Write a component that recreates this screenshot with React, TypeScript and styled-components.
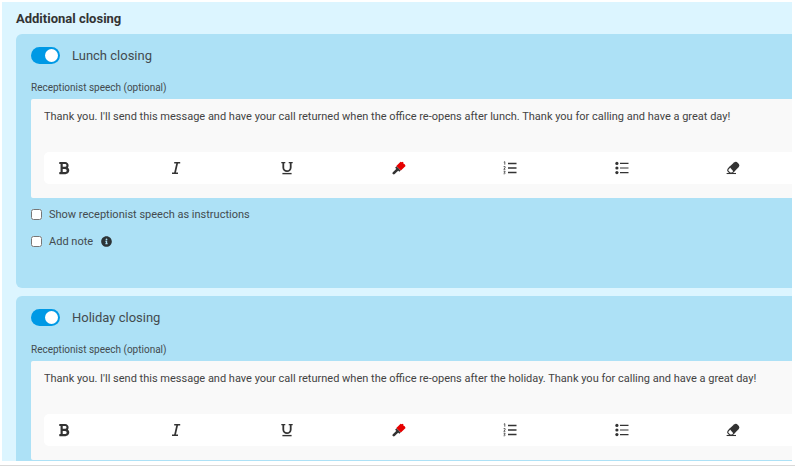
import React, { useId, useState } from "react";
import styled, { createGlobalStyle } from "styled-components";
import { FaBold, FaInfoCircle } from "react-icons/fa";

const GlobalStyle = createGlobalStyle`
  *, *::before, *::after { box-sizing: border-box; }
  body {
    margin: 0;
    background: #ffffff;
    color: #434b4f;
    font-family: Roboto, "Liberation Sans", sans-serif;
  }
`;

const Page = styled.div`
  padding-bottom: 1px;
`;

const Section = styled.main`
  margin: 2px 3px 4px 2px;
  padding: 8px 0 0 14px;
  background: #dcf5ff;
`;

const Heading = styled.h2`
  margin: 0 0 6px;
  font-size: 13px;
  line-height: 18px;
  font-weight: 700;
  color: #333333;
`;

const CardList = styled.div`
  display: flex;
  flex-direction: column;
  gap: 8px;
`;

const Card = styled.section<{ $continues: boolean }>`
  padding: 12px 0 ${(p) => (p.$continues ? 1 : 38)}px 15px;
  background: #ade1f6;
  border-radius: ${(p) => (p.$continues ? "6px 0 0 0" : "6px 0 0 6px")};
`;

const SwitchRow = styled.label`
  display: flex;
  align-items: center;
  gap: 12px;
  height: 19px;
  font-size: 13px;
`;

const Switch = styled.input`
  appearance: none;
  display: flex;
  align-items: center;
  width: 29px;
  height: 17px;
  margin: 0;
  padding: 0 2px;
  border-radius: 9px;
  background: #8fa3ad;
  cursor: pointer;

  &::before {
    content: "";
    width: 13px;
    height: 13px;
    border-radius: 50%;
    background: #ffffff;
  }

  &:checked {
    justify-content: flex-end;
    background: #0099e5;
  }
`;

const FieldLabel = styled.label`
  display: block;
  margin: 16px 0 4px;
  font-size: 10px;
  line-height: 14px;
`;

const Editor = styled.div`
  padding: 9px 0 14px 13px;
  border-radius: 2px 0 0 2px;
  background: #f9f9f9;
`;

const Speech = styled.textarea`
  display: block;
  width: 100%;
  height: 44px;
  margin: 0;
  padding: 0;
  border: 0;
  outline: 0;
  resize: none;
  overflow: hidden;
  background: transparent;
  color: #434343;
  font: 11px/18px Roboto, "Liberation Sans", sans-serif;
`;

const Toolbar = styled.div`
  display: flex;
  justify-content: space-between;
  align-items: center;
  height: 32px;
  padding: 0 44px 0 5px;
  border-radius: 5px 0 0 5px;
  background: #ffffff;
`;

const ToolButton = styled.button`
  display: flex;
  align-items: center;
  justify-content: center;
  width: 30px;
  height: 24px;
  padding: 0;
  border: 0;
  background: transparent;
  color: #333333;
  cursor: pointer;
`;

const Options = styled.div`
  display: flex;
  flex-direction: column;
  gap: 9px;
  padding-top: 7px;
`;

const OptionRow = styled.div`
  display: flex;
  align-items: center;
  gap: 8px;
  height: 18px;
  font-size: 11px;
`;

const OptionLabel = styled.label`
  display: flex;
  align-items: center;
  gap: 7px;
`;

const Checkbox = styled.input`
  width: 11px;
  height: 11px;
  margin: 0;
`;

const InfoIcon = styled(FaInfoCircle)`
  color: #2c3336;
`;

const BottomRule = styled.hr`
  height: 1px;
  margin: 0;
  border: 0;
  background: #d9d9d9;
`;

const ItalicIcon = () => (
  <svg width="14" height="14" viewBox="0 0 14 14" fill="none" stroke="#333" aria-hidden="true">
    <path d="M5.2 1.7h6M3 12.3h6" strokeWidth="1.4" />
    <path d="M8.3 1.7 5.9 12.3" strokeWidth="1.7" />
  </svg>
);

const UnderlineIcon = () => (
  <svg width="14" height="14" viewBox="0 0 14 14" fill="none" stroke="#333" aria-hidden="true">
    <path d="M1.3 1.6h4M8.7 1.6h4" strokeWidth="1.2" />
    <path d="M3.3 1.6v4.9a3.7 3.7 0 0 0 7.4 0V1.6" strokeWidth="1.8" />
    <path d="M2.4 12.6h9.2" strokeWidth="1.4" />
  </svg>
);

const BrushIcon = () => (
  <svg width="14" height="14" viewBox="0 0 14 14" aria-hidden="true">
    <path d="M1.8 12.2 4.6 9.4" stroke="#333" strokeWidth="2.6" strokeLinecap="round" />
    <path d="M4.6 9.4 6.4 7.6" stroke="#333" strokeWidth="2.2" />
    <path d="M3.8 6 8 10.2" stroke="#333" strokeWidth="1.9" />
    <path
      d="M8.6.8 9.8 1.3 10.7.7 11.7 1.9 11.4 2.9 12.5 3.1 13.6 4.9 8.9 9.6 4.3 5Z"
      fill="#e60000"
    />
  </svg>
);

const NumberedListIcon = () => (
  <svg width="14" height="14" viewBox="0 0 14 14" fill="none" stroke="#333" aria-hidden="true">
    <path d="M5 2.5h8.5M5 7h8.5M5 11.5h8.5" strokeWidth="1.3" />
    <path
      d="M.8 1.2 1.8.7v3M.6 5.6h1.5v1.1L.8 8.3h1.6M.6 10.2h1.6l-.9 1.2c1.4 0 1.2 1.7-.7 1.4"
      strokeWidth=".8"
    />
  </svg>
);

const BulletListIcon = () => (
  <svg width="14" height="14" viewBox="0 0 14 14" fill="#333" aria-hidden="true">
    <circle cx="1.9" cy="2.4" r="1.6" />
    <circle cx="1.9" cy="7" r="1.6" />
    <circle cx="1.9" cy="11.6" r="1.6" />
    <path d="M5 2.4h8.5M5 7h8.5M5 11.6h8.5" stroke="#333" strokeWidth="1.2" />
  </svg>
);

const EraserIcon = () => (
  <svg width="14" height="14" viewBox="0 0 14 14" aria-hidden="true">
    <path
      d="M3.4 5.8 8 1.5Q9.4.4 10.8 1L12.9 3Q13.9 4.6 12.8 5.9L7.9 10.9Z"
      fill="#333"
    />
    <path
      d="M3.9 6 2.1 8.2Q1.3 9.2 2.1 10.2L3.8 12H6.4L8 10"
      fill="none"
      stroke="#333"
      strokeWidth="1.2"
    />
    <path d="M.6 12.5h9.4" stroke="#333" strokeWidth="1.1" />
  </svg>
);

const tools = [
  { name: "Bold", icon: <FaBold size={14} /> },
  { name: "Italic", icon: <ItalicIcon /> },
  { name: "Underline", icon: <UnderlineIcon /> },
  { name: "Text color", icon: <BrushIcon /> },
  { name: "Numbered list", icon: <NumberedListIcon /> },
  { name: "Bulleted list", icon: <BulletListIcon /> },
  { name: "Clear formatting", icon: <EraserIcon /> },
];

interface ClosingCardProps {
  title: string;
  message: string;
  continues?: boolean;
}

function ClosingCard({ title, message, continues = false }: ClosingCardProps) {
  const speechId = useId();
  const [enabled, setEnabled] = useState(true);
  const [text, setText] = useState(message);

  return (
    <Card $continues={continues}>
      <SwitchRow>
        <Switch
          type="checkbox"
          role="switch"
          checked={enabled}
          onChange={(e) => setEnabled(e.target.checked)}
        />
        {title}
      </SwitchRow>
      <FieldLabel htmlFor={speechId}>Receptionist speech (optional)</FieldLabel>
      <Editor>
        <Speech
          id={speechId}
          value={text}
          spellCheck={false}
          onChange={(e) => setText(e.target.value)}
        />
        <Toolbar role="toolbar">
          {tools.map((tool) => (
            <ToolButton key={tool.name} type="button" aria-label={tool.name}>
              {tool.icon}
            </ToolButton>
          ))}
        </Toolbar>
      </Editor>
      {!continues && (
        <Options>
          <OptionRow>
            <OptionLabel>
              <Checkbox type="checkbox" />
              Show receptionist speech as instructions
            </OptionLabel>
          </OptionRow>
          <OptionRow>
            <OptionLabel>
              <Checkbox type="checkbox" />
              Add note
            </OptionLabel>
            <InfoIcon size={11} />
          </OptionRow>
        </Options>
      )}
    </Card>
  );
}

export default function App() {
  return (
    <>
      <GlobalStyle />
      <Page>
        <Section>
          <Heading>Additional closing</Heading>
          <CardList>
            <ClosingCard
              title="Lunch closing"
              message="Thank you. I'll send this message and have your call returned when the office re-opens after lunch. Thank you for calling and have a great day!"
            />
            <ClosingCard
              title="Holiday closing"
              message="Thank you. I'll send this message and have your call returned when the office re-opens after the holiday. Thank you for calling and have a great day!"
              continues
            />
          </CardList>
        </Section>
        <BottomRule />
      </Page>
    </>
  );
}
